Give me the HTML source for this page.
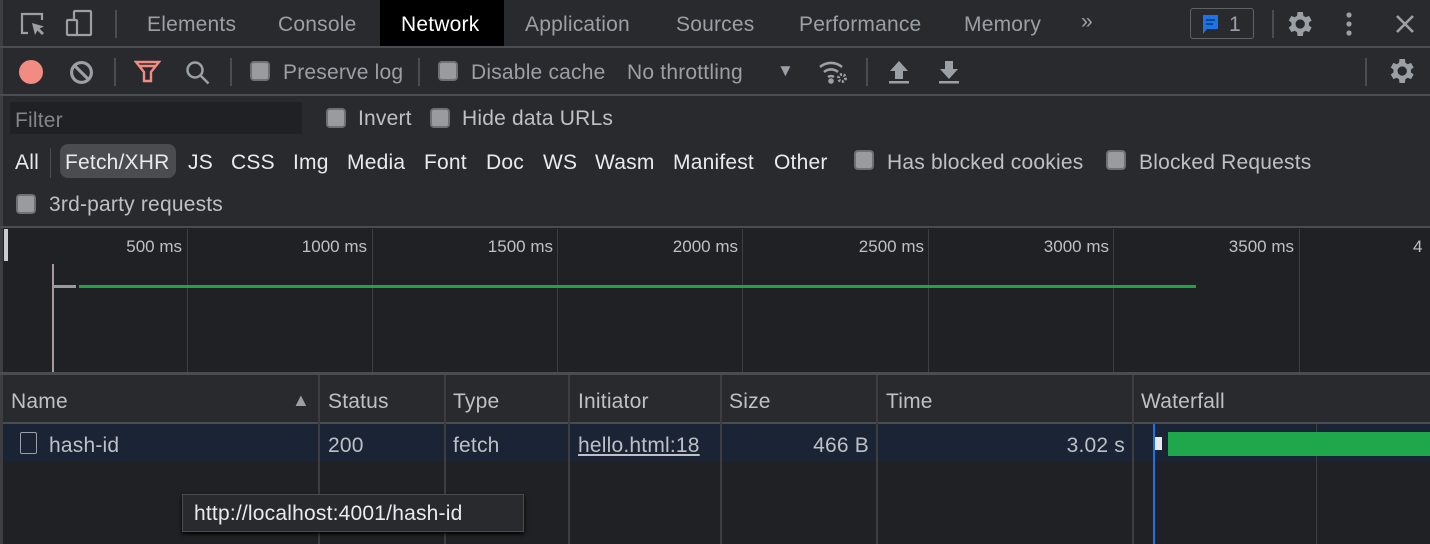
<!DOCTYPE html>
<html><head><meta charset="utf-8"><style>
*{margin:0;padding:0;box-sizing:border-box}
body{width:1430px;height:544px;background:#292a2d;font-family:"Liberation Sans",sans-serif;font-size:21px;letter-spacing:0.2px;color:#bdc1c6;position:relative;overflow:hidden}
.a{position:absolute;white-space:nowrap}
.t{top:13px;color:#9aa0a6}
.cb{position:absolute;width:20px;height:20px;background:#9a9b9e;border:2px solid #6f7073;border-radius:4px}
.hl{position:absolute;height:2px;background:#494c50;left:0;width:1430px}
.vl{position:absolute;width:2px;background:#3c3e42}
.sep{position:absolute;width:2px;background:#4a4c50}
.g{position:absolute;top:229px;height:143px;width:1px;background:#3c3e42}
.ms{top:237px;font-size:17px;letter-spacing:0;color:#bdc1c6}
</style></head><body>
<div class="a" style="left:0;top:0;width:3px;height:544px;background:#3c3e42"></div>
<svg class="a" style="left:18px;top:10px" width="30" height="30" viewBox="0 0 30 30" fill="none" stroke="#9aa0a6" stroke-width="2.2"><path d="M10 23H4V4h20v6"/><path d="M14 13l3 12 2.5-4.5 4.5 4.5 2-2-4.5-4.5 4.5-2z" fill="#9aa0a6" stroke="none"/></svg>
<svg class="a" style="left:64px;top:8px" width="32" height="32" viewBox="0 0 32 32" fill="none" stroke="#9aa0a6" stroke-width="2.2"><rect x="10" y="3" width="17" height="24" rx="1"/><rect x="3" y="12" width="10" height="15" rx="1" fill="#292a2d"/></svg>
<div class="sep" style="left:115px;top:10px;height:28px"></div>
<div class="a t" style="left:147px">Elements</div>
<div class="a t" style="left:278px">Console</div>
<div class="a" style="left:380px;top:0;width:124px;height:46px;background:#000"></div>
<div class="a t" style="left:401px;color:#fff">Network</div>
<div class="a t" style="left:525px">Application</div>
<div class="a t" style="left:676px">Sources</div>
<div class="a t" style="left:799px">Performance</div>
<div class="a t" style="left:964px">Memory</div>
<div class="a t" style="left:1081px;top:10px">»</div>
<div class="a" style="left:1190px;top:8px;width:64px;height:31px;border:1.5px solid #5f6368;border-radius:3px"></div>
<svg class="a" style="left:1200px;top:13px" width="24" height="24" viewBox="0 0 24 24"><path d="M3 2h15v14H7l-4 5z" fill="#1a73e8"/><path d="M6 7h9M6 11h7" stroke="#0b3d80" stroke-width="1.8"/></svg>
<div class="a t" style="left:1229px">1</div>
<div class="sep" style="left:1272px;top:10px;height:28px"></div>
<svg class="a" style="left:1283px;top:8px" width="32" height="32" viewBox="0 0 24 24"><path fill="#9aa0a6" d="M19.4 13a7.5 7.5 0 000-2l2.1-1.6-2-3.5-2.5 1a7 7 0 00-1.7-1L14.9 3h-4l-.4 2.9a7 7 0 00-1.7 1l-2.5-1-2 3.5L6.4 11a7.5 7.5 0 000 2l-2.1 1.6 2 3.5 2.5-1a7 7 0 001.7 1l.4 2.9h4l.4-2.9a7 7 0 001.7-1l2.5 1 2-3.5zM12.9 15.5a3.5 3.5 0 110-7 3.5 3.5 0 010 7z"/></svg>
<svg class="a" style="left:1342px;top:10px" width="14" height="28"><circle cx="7" cy="5" r="2.6" fill="#9aa0a6"/><circle cx="7" cy="14" r="2.6" fill="#9aa0a6"/><circle cx="7" cy="23" r="2.6" fill="#9aa0a6"/></svg>
<svg class="a" style="left:1394px;top:13px" width="22" height="22" stroke="#9aa0a6" stroke-width="2.6"><path d="M3 3l16 16M19 3L3 19"/></svg>
<div class="hl" style="top:46px"></div>
<div class="a" style="left:19px;top:60px;width:24px;height:24px;border-radius:50%;background:#f28b82"></div>
<svg class="a" style="left:69px;top:60px" width="25" height="25" viewBox="0 0 24 24" fill="none" stroke="#9aa0a6" stroke-width="3"><circle cx="12" cy="12" r="9.5"/><path d="M5.5 5.5l13 13"/></svg>
<div class="sep" style="left:114px;top:58px;height:28px"></div>
<svg class="a" style="left:134px;top:60px" width="27" height="24" viewBox="0 0 27 24" fill="none" stroke="#f28b82" stroke-width="2.4"><path d="M2 2h23l-8 10v9h-7v-9z"/><path d="M5 6h17" /></svg>
<svg class="a" style="left:184px;top:59px" width="28" height="28" viewBox="0 0 28 28" fill="none" stroke="#9aa0a6" stroke-width="2.5"><circle cx="11" cy="11" r="7.5"/><path d="M16.5 16.5l8 8"/></svg>
<div class="sep" style="left:230px;top:58px;height:28px"></div>
<div class="cb" style="left:250px;top:61px"></div>
<div class="a" style="left:283px;top:61px;color:#9aa0a6">Preserve log</div>
<div class="sep" style="left:418px;top:58px;height:28px"></div>
<div class="cb" style="left:438px;top:61px"></div>
<div class="a" style="left:471px;top:61px;color:#9aa0a6">Disable cache</div>
<div class="a" style="left:627px;top:61px;color:#9aa0a6">No throttling</div>
<div class="a" style="left:777px;top:61px;font-size:17px;color:#9aa0a6">▼</div>
<svg class="a" style="left:818px;top:58px" width="32" height="28" viewBox="0 0 32 28" fill="none" stroke="#9aa0a6" stroke-width="2.6"><path d="M2 9a17 17 0 0122 0M6 14a11 11 0 0114 0M10 19a5 5 0 016 0"/><circle cx="13" cy="23" r="1.5" fill="#9aa0a6"/><circle cx="24" cy="20" r="3.5" stroke-width="3" stroke-dasharray="2 1.6"/></svg>
<div class="sep" style="left:866px;top:58px;height:28px"></div>
<svg class="a" style="left:887px;top:59px" width="24" height="26" viewBox="0 0 24 26" fill="#9aa0a6"><path d="M12 2l9 10h-5v8H8v-8H3z"/><rect x="2" y="22" width="20" height="2.5"/></svg>
<svg class="a" style="left:937px;top:59px" width="24" height="26" viewBox="0 0 24 26" fill="#9aa0a6"><path d="M12 20l9-10h-5V2H8v8H3z"/><rect x="2" y="22" width="20" height="2.5"/></svg>
<div class="sep" style="left:1365px;top:58px;height:28px"></div>
<svg class="a" style="left:1385px;top:55px" width="32" height="32" viewBox="0 0 24 24"><path fill="#9aa0a6" d="M19.4 13a7.5 7.5 0 000-2l2.1-1.6-2-3.5-2.5 1a7 7 0 00-1.7-1L14.9 3h-4l-.4 2.9a7 7 0 00-1.7 1l-2.5-1-2 3.5L6.4 11a7.5 7.5 0 000 2l-2.1 1.6 2 3.5 2.5-1a7 7 0 001.7 1l.4 2.9h4l.4-2.9a7 7 0 001.7-1l2.5 1 2-3.5zM12.9 15.5a3.5 3.5 0 110-7 3.5 3.5 0 010 7z"/></svg>
<div class="hl" style="top:94px"></div>
<div class="a" style="left:10px;top:102px;width:292px;height:32px;background:#202124"></div>
<div class="a" style="left:15px;top:109px;color:#80868b">Filter</div>
<div class="cb" style="left:326px;top:108px"></div>
<div class="a" style="left:358px;top:107px">Invert</div>
<div class="cb" style="left:430px;top:108px"></div>
<div class="a" style="left:462px;top:107px">Hide data URLs</div>
<div class="a" style="left:15px;top:151px;color:#e8eaed">All</div>
<div class="sep" style="left:50px;top:148px;height:30px;width:1px"></div>
<div class="a" style="left:60px;top:144px;width:116px;height:34px;border-radius:8px;background:#4a4c50"></div>
<div class="a" style="left:65px;top:151px;color:#e8eaed">Fetch/XHR</div>
<div class="a" style="left:188px;top:151px;color:#e8eaed">JS</div>
<div class="a" style="left:231px;top:151px;color:#e8eaed">CSS</div>
<div class="a" style="left:293px;top:151px;color:#e8eaed">Img</div>
<div class="a" style="left:347px;top:151px;color:#e8eaed">Media</div>
<div class="a" style="left:424px;top:151px;color:#e8eaed">Font</div>
<div class="a" style="left:486px;top:151px;color:#e8eaed">Doc</div>
<div class="a" style="left:543px;top:151px;color:#e8eaed">WS</div>
<div class="a" style="left:595px;top:151px;color:#e8eaed">Wasm</div>
<div class="a" style="left:673px;top:151px;color:#e8eaed">Manifest</div>
<div class="a" style="left:774px;top:151px;color:#e8eaed">Other</div>
<div class="cb" style="left:854px;top:150px"></div>
<div class="a" style="left:887px;top:151px">Has blocked cookies</div>
<div class="cb" style="left:1106px;top:150px"></div>
<div class="a" style="left:1139px;top:151px">Blocked Requests</div>
<div class="cb" style="left:16px;top:194px"></div>
<div class="a" style="left:49px;top:193px">3rd-party requests</div>
<div class="hl" style="top:226px"></div>
<div class="a" style="left:3px;top:228px;width:1427px;height:145px;background:#202124"></div>
<div class="a" style="left:4px;top:229px;width:4px;height:32px;background:#ccc"></div>
<div class="g" style="left:187px"></div><div class="g" style="left:372px"></div><div class="g" style="left:557px"></div><div class="g" style="left:742px"></div><div class="g" style="left:928px"></div><div class="g" style="left:1113px"></div><div class="g" style="left:1299px"></div>
<div class="a ms" style="right:1248px">500 ms</div>
<div class="a ms" style="right:1063px">1000 ms</div>
<div class="a ms" style="right:877px">1500 ms</div>
<div class="a ms" style="right:692px">2000 ms</div>
<div class="a ms" style="right:506px">2500 ms</div>
<div class="a ms" style="right:321px">3000 ms</div>
<div class="a ms" style="right:136px">3500 ms</div>
<div class="a ms" style="left:1413px">4</div>
<div class="a" style="left:52px;top:264px;width:2px;height:108px;background:#a89a9a"></div>
<div class="a" style="left:54px;top:285px;width:22px;height:3px;background:#9a9a9a"></div>
<div class="a" style="left:79px;top:285px;width:1117px;height:3px;background:#1ea446"></div>
<div class="hl" style="top:372px;height:3px"></div>
<div class="a" style="left:3px;top:375px;width:1427px;height:47px;background:#292a2d"></div>
<div class="a" style="left:3px;top:422px;width:1427px;height:2px;background:#494c50"></div>
<div class="a" style="left:3px;top:424px;width:1427px;height:38px;background:#1b2435"></div>
<div class="a" style="left:3px;top:462px;width:1427px;height:82px;background:#202124"></div>
<div class="vl" style="left:318px;top:375px;height:169px"></div>
<div class="vl" style="left:444px;top:375px;height:169px"></div>
<div class="vl" style="left:568px;top:375px;height:169px"></div>
<div class="vl" style="left:720px;top:375px;height:169px"></div>
<div class="vl" style="left:876px;top:375px;height:169px"></div>
<div class="vl" style="left:1132px;top:375px;height:169px"></div>
<div class="a" style="left:1316px;top:424px;width:1px;height:120px;background:#3c3e42"></div>
<div class="a" style="left:11px;top:390px">Name</div>
<div class="a" style="left:292px;top:390px;font-size:18px;color:#9aa0a6">▲</div>
<div class="a" style="left:328px;top:390px">Status</div>
<div class="a" style="left:453px;top:390px">Type</div>
<div class="a" style="left:578px;top:390px">Initiator</div>
<div class="a" style="left:729px;top:390px">Size</div>
<div class="a" style="left:886px;top:390px">Time</div>
<div class="a" style="left:1141px;top:390px">Waterfall</div>
<div class="a" style="left:20px;top:432px;width:17px;height:22px;border:1.5px solid #9aa0a6;border-radius:2px"></div>
<div class="a" style="left:49px;top:434px">hash-id</div>
<div class="a" style="left:328px;top:434px">200</div>
<div class="a" style="left:453px;top:434px">fetch</div>
<div class="a" style="left:578px;top:434px;text-decoration:underline">hello.html:18</div>
<div class="a" style="right:561px;top:434px">466 B</div>
<div class="a" style="right:305px;top:434px">3.02 s</div>
<div class="a" style="left:1153px;top:424px;width:2px;height:120px;background:#1a73e8"></div>
<div class="a" style="left:1155px;top:437px;width:7px;height:13px;background:#e8eaed"></div>
<div class="a" style="left:1168px;top:432px;width:262px;height:24px;background:#1ea84b"></div>
<div class="a" style="left:182px;top:494px;width:342px;height:38px;background:#292a2d;border:1px solid #4a4c50;box-shadow:0 2px 4px #000"></div>
<div class="a" style="left:194px;top:502px;color:#e8eaed">http://localhost:4001/hash-id</div>
</body></html>
